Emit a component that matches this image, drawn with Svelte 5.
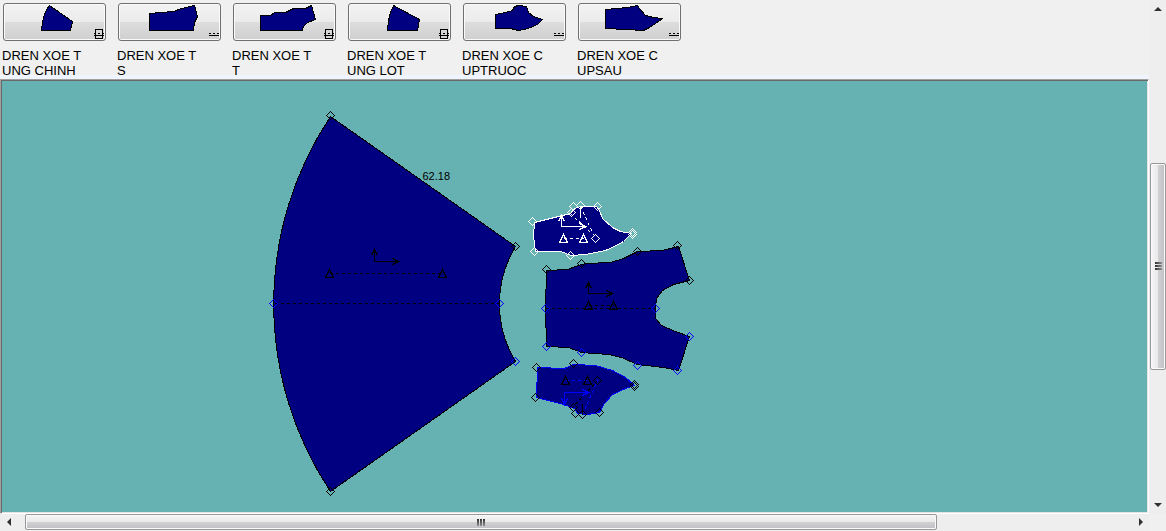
<script>
  const thumbs = [
    { lines: ["DREN XOE T", "UNG CHINH"], paired: true, points: "45,1 68,17 66,26 37,26 38,17 40,10 42,5" },
    { lines: ["DREN XOE T", "S"], paired: false, points: "30,9 54,7 62,4 75,1 78,12 75,18 74,26 30,26" },
    {
      lines: ["DREN XOE T", "T"],
      paired: true,
      points: "26,11 36,11 40,8 51,8 59,4 71,4 77,1 81,15 73,18 69,22 68,26 26,26",
    },
    { lines: ["DREN XOE T", "UNG LOT"], paired: true, points: "44,1 70,15 68,26 38,26 39,16 41,8" },
    {
      lines: ["DREN XOE C", "UPTRUOC"],
      paired: false,
      points: "31,10 41,8 48,6 50,2 54,1 62,2 64,8 69,12 78,15 73,20 66,23 60,25 54,26 46,24 31,24",
    },
    {
      lines: ["DREN XOE C", "UPSAU"],
      paired: false,
      points: "26,5 48,3 58,1 60,4 66,11 74,13 83,14 76,19 70,23 64,26 46,25 26,24",
    },
  ];

  // axis: origin x, origin y, end x, end y; grain: first x, second x, y
  const pieces = [
    {
      color: "#000",
      d: "M330 116L515 246A111 111 0 0 0 515 361L330 491A338 338 0 0 1 330 116Z",
      axis: [374, 261, 398, 249],
      grain: [329, 442, 273],
      grainColor: "#000",
      dashes: [{ d: "M274 303H499", color: "#000" }],
      nodes: [[330, 115], [515, 246], [330, 491]],
      nodeColor: "#000",
      folds: [[273, 303], [499, 303], [515, 361]],
    },
    {
      color: "#000",
      d: "M546 270L567 269L578 265L585 263L610 262L623 258L637 251L662 250L678 246L689 280L673 284L662 290L656 298L655 308L655 318L661 325L675 331L689 336L678 370L663 367L637 364L621 357L608 354L581 352L568 347L546 346L545 308Z",
      axis: [588, 293, 612, 282],
      grain: [588, 613, 305],
      grainColor: "#000",
      dashes: [{ d: "M545 308H655", color: "#000" }],
      nodes: [[546, 269], [581, 263], [637, 251], [677, 245], [689, 280]],
      nodeColor: "#000",
      folds: [[545, 308], [655, 308], [546, 346], [581, 352], [637, 365], [677, 370], [689, 336]],
    },
    {
      color: "#fff",
      d: "M534 222L558 216L570 213L574 208L580 206L596 206L599 210L602 218L612 227L620 231L631 233L623 241L614 246L605 250L585 254L571 255L560 251L535 251L533 235Z",
      axis: [561, 226, 585, 215],
      grain: [563, 583, 238],
      grainColor: "#fff",
      notch: "M580 206V217",
      dashes: [
        { d: "M570 213L592 234", color: "#fff" },
        { d: "M580 206L595 238", color: "#fff" },
      ],
      nodes: [[532, 221], [534, 251], [570, 255], [573, 206], [580, 205], [597, 206], [571, 212], [632, 232], [632, 234], [595, 238]],
      nodeColor: "#fff",
      folds: [],
    },
    {
      color: "#00f",
      d: "M537 367L564 368L573 364L595 365L612 370L625 377L634 385L625 388L612 394L604 403L599 412L587 414L577 413L574 408L563 404L536 397Z",
      axis: [564, 392, 588, 404],
      grain: [565, 587, 380],
      grainColor: "#000",
      notch: "M582 403V414",
      dashes: [
        { d: "M571 408L597 380", color: "#000" },
        { d: "M582 414L597 380", color: "#00f" },
      ],
      nodes: [[536, 367], [573, 363], [535, 397], [634, 384], [634, 386], [599, 412], [582, 414], [575, 413], [573, 407], [597, 380]],
      nodeColor: "#000",
      folds: [],
    },
  ];

  const vertical = { before: 146, size: 206, after: 127 };
  const horizontal = { before: 8, size: 912, after: 195 };

  function diamond([x, y]) {
    return `M${x} ${y - 4}l4 4l-4 4l-4 -4z`;
  }

  function triangle(x, y) {
    return `M${x} ${y - 4}l4 8h-8z`;
  }

  function arrows([x, y, ex, ey]) {
    const s = ey < y ? 1 : -1;
    return `M${x} ${ey}V${y}H${ex}M${x - 3} ${ey + 6 * s}L${x} ${ey}L${x + 3} ${ey + 6 * s}M${ex - 6} ${y - 3}L${ex} ${y}L${ex - 6} ${y + 3}`;
  }
</script>

<div class="app">
  <div class="toolbar">
    {#each thumbs as thumb, i}
      <div class="piece">
        <button id="piece-{i}" aria-labelledby="label-{i}">
          <svg width="101" height="36" shape-rendering="crispEdges">
            <g transform="translate(.5 .5)" fill="none" stroke="#000">
              <polygon points={thumb.points} fill="#000080" />
              {#if thumb.paired}
                <rect x="91" y="25" width="7" height="9" />
              {/if}
              <path d="M89 31H99" />
              <path d="M89 29H99" stroke-dasharray="2 2" />
            </g>
          </svg>
        </button>
        <label id="label-{i}" for="piece-{i}">{thumb.lines[0]}<br />{thumb.lines[1]}</label>
      </div>
    {/each}
  </div>

  <main id="canvas">
    <svg class="drawing" shape-rendering="crispEdges">
      <g transform="translate(-.5 -79.5)" fill="none">
        {#each pieces as piece}
          <path d={piece.d} fill="#000080" stroke={piece.color} />
          {#each piece.dashes as dash}
            <path d={dash.d} stroke={dash.color} stroke-dasharray="3 3" />
          {/each}
          <path d={arrows(piece.axis)} stroke={piece.color} />
          <path
            d="M{piece.grain[0]} {piece.grain[2]}H{piece.grain[1]}"
            stroke={piece.color}
            stroke-dasharray="3 3"
          />
          <path
            d={triangle(piece.grain[0], piece.grain[2]) + triangle(piece.grain[1], piece.grain[2])}
            stroke={piece.grainColor}
          />
          {#if piece.notch}
            <path d={piece.notch} stroke={piece.nodeColor} />
          {/if}
          <path d={piece.nodes.map(diamond).join("")} stroke={piece.nodeColor} />
          <path d={piece.folds.map(diamond).join("")} stroke="#00f" />
        {/each}
        <text x="422" y="179">62.18</text>
      </g>
    </svg>
  </main>

  <div
    class="scrollbar vertical"
    role="scrollbar"
    aria-controls="canvas"
    aria-orientation="vertical"
    aria-valuenow="53"
    tabindex="0"
  >
    <button class="arrow" aria-label="Scroll up">
      <svg width="8" height="4"><path d="M0 4L4 0L8 4z" /></svg>
    </button>
    <div style="flex: {vertical.before}"></div>
    <div class="thumb" style="flex: {vertical.size}"><i></i><i></i><i></i></div>
    <div style="flex: {vertical.after}"></div>
    <button class="arrow" aria-label="Scroll down">
      <svg width="8" height="4"><path d="M0 0L4 4L8 0z" /></svg>
    </button>
  </div>

  <div
    class="scrollbar horizontal"
    role="scrollbar"
    aria-controls="canvas"
    aria-orientation="horizontal"
    aria-valuenow="4"
    tabindex="0"
  >
    <button class="arrow" aria-label="Scroll left">
      <svg width="4" height="8"><path d="M4 0L0 4L4 8z" /></svg>
    </button>
    <div style="flex: {horizontal.before}"></div>
    <div class="thumb" style="flex: {horizontal.size}"><i></i><i></i><i></i></div>
    <div style="flex: {horizontal.after}"></div>
    <button class="arrow" aria-label="Scroll right">
      <svg width="4" height="8"><path d="M0 0L4 4L0 8z" /></svg>
    </button>
  </div>
</div>

<style>
  * {
    box-sizing: border-box;
  }
  .app {
    display: grid;
    grid-template-columns: minmax(0, 1fr) 17px;
    grid-template-rows: auto minmax(0, 1fr) 17px;
    height: 100vh;
    background: #f0f0f0;
    font-family: "Liberation Sans", Arial, sans-serif;
    color: #000;
  }
  .toolbar {
    display: flex;
    gap: 12px;
    padding: 3px 3px 1px;
    overflow: hidden;
    background: linear-gradient(to top, #f0f4ff 4px, #f0f0f0 4px);
  }
  .piece {
    flex: none;
    width: 103px;
  }
  .piece button {
    display: block;
    width: 100%;
    padding: 0;
    border: 1px solid #707070;
    border-radius: 3px;
    background: linear-gradient(#f2f2f2, #ebebeb 50%, #dddddd 50%, #cfcfcf);
    box-shadow: inset 0 0 0 1px #fafafa;
  }
  .piece svg {
    display: block;
  }
  .piece label {
    display: block;
    margin: 7px 0 0 -1px;
    font-size: 13px;
    line-height: 15px;
    white-space: nowrap;
  }
  main {
    grid-column: 1;
    min-width: 0;
    border: 1px solid;
    border-color: #a0a0a0 #ffffff #ffffff #a0a0a0;
    background: #66b2b2;
    box-shadow:
      inset 1px 1px #696969,
      inset -1px -1px #e3e3e3;
  }
  .drawing {
    display: block;
    width: 100%;
    height: 100%;
  }
  .drawing text {
    font-size: 11px;
    fill: #000;
  }
  .scrollbar {
    display: flex;
    background: #eeeeee;
    outline: none;
  }
  .vertical {
    grid-column: 2;
    grid-row: 1 / 3;
    flex-direction: column;
    padding-left: 1px;
  }
  .horizontal {
    grid-column: 1;
    grid-row: 3;
    padding-bottom: 1px;
  }
  .arrow {
    display: flex;
    flex: none;
    align-items: center;
    justify-content: center;
    width: 17px;
    height: 16px;
    padding: 0;
    border: 0;
    background: none;
  }
  .vertical .arrow {
    width: 16px;
    height: 17px;
  }
  .arrow path {
    fill: #303030;
  }
  .thumb {
    display: flex;
    align-items: center;
    justify-content: center;
    gap: 1px;
    border: 1px solid #979797;
    border-radius: 2px;
    box-shadow: inset 0 0 0 1px #fafafa;
    background: linear-gradient(#f5f5f5, #e9e9eb 50%, #d1d1d4 50%, #c0c0c4);
  }
  .vertical .thumb {
    flex-direction: column;
    background: linear-gradient(to right, #f5f5f5, #e9e9eb 50%, #d1d1d4 50%, #c0c0c4);
  }
  .thumb i {
    width: 2px;
    height: 7px;
    background: linear-gradient(#303030, #909090);
  }
  .vertical .thumb i {
    width: 7px;
    height: 2px;
    background: linear-gradient(to right, #303030, #909090);
  }
</style>
